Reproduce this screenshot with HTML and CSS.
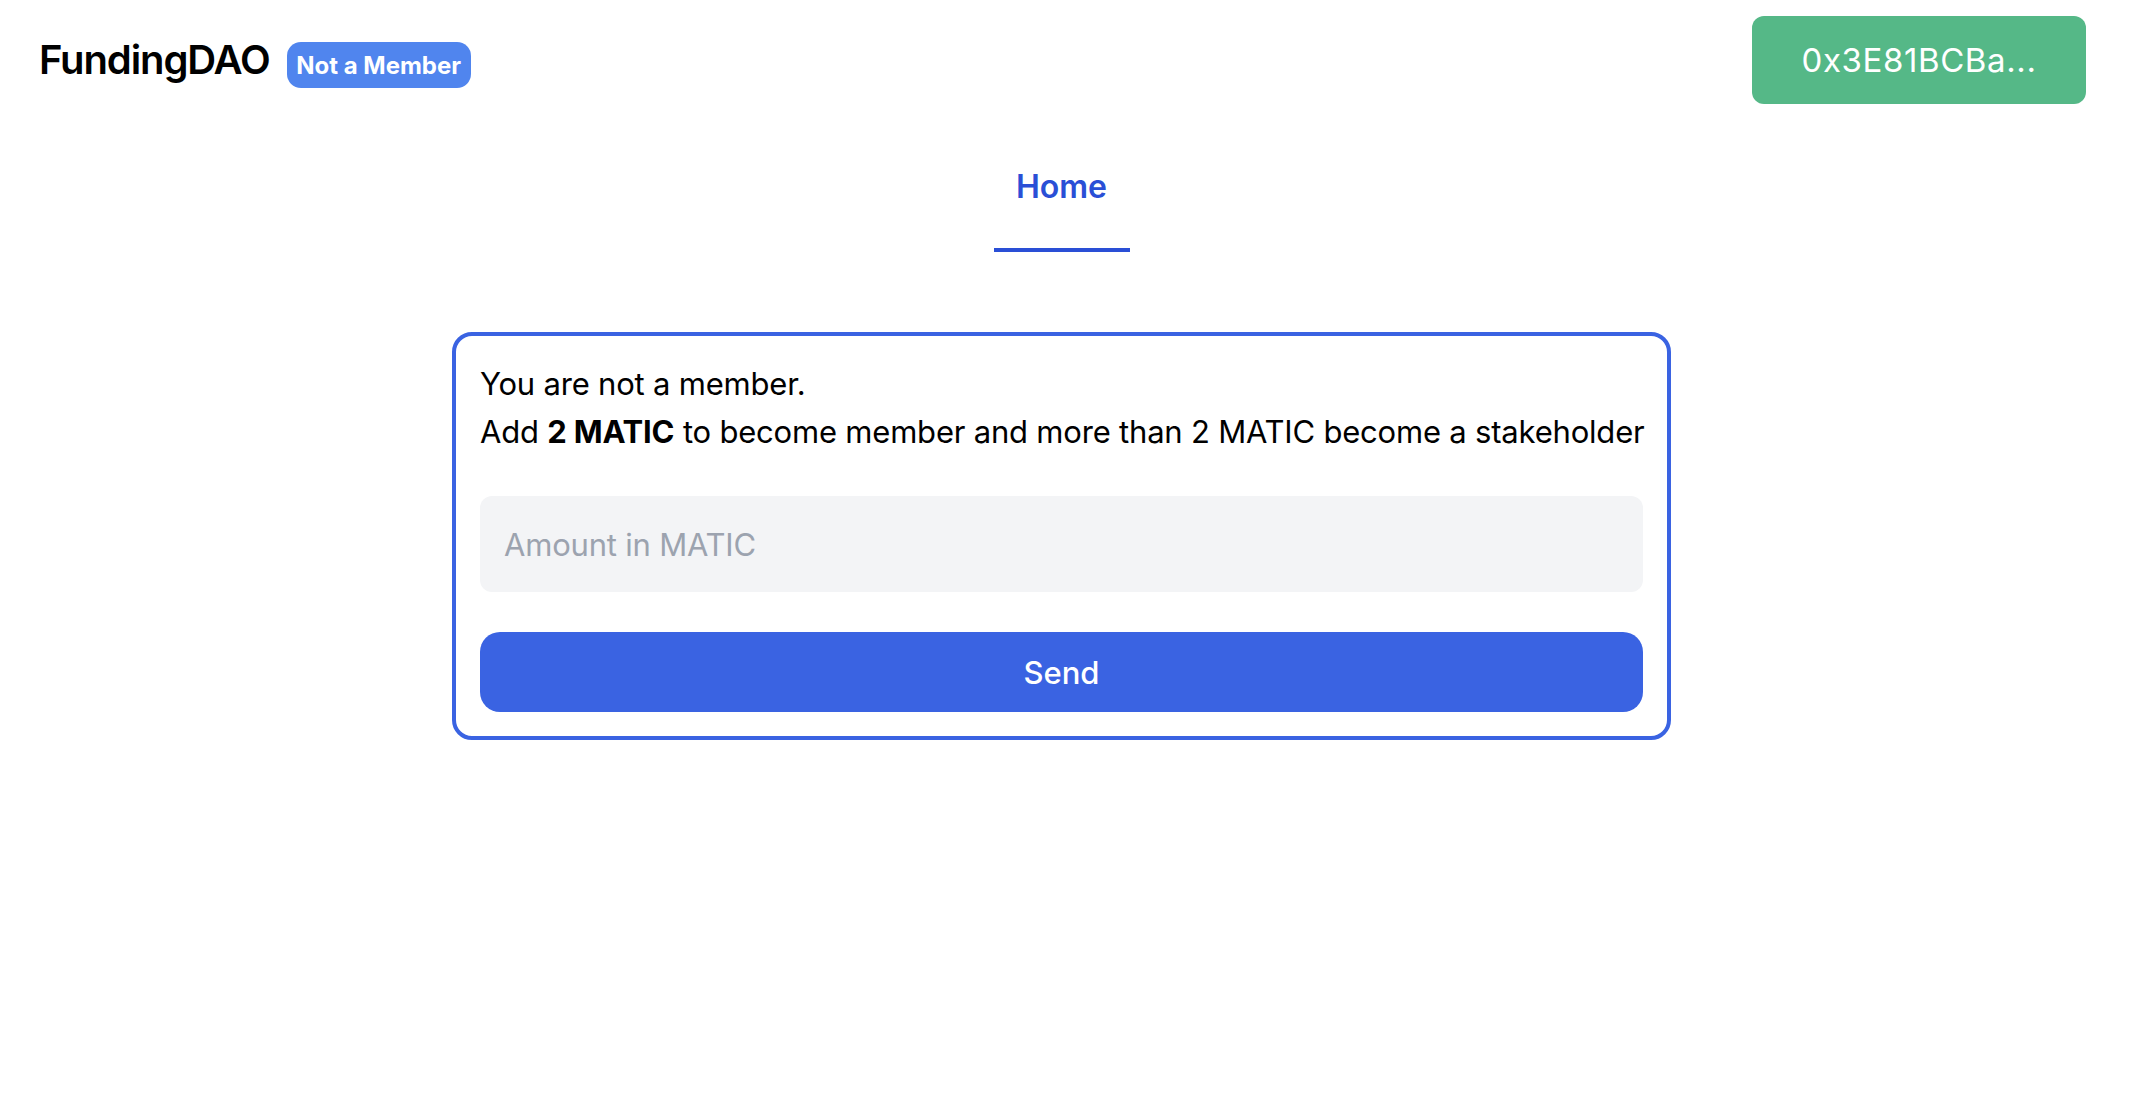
FILE: index.html
```html
<!DOCTYPE html>
<html lang="en">
<head>
<meta charset="utf-8">
<title>FundingDAO</title>
<link rel="stylesheet" href="styles.css">
</head>
<body>
<div class="page">
  <header class="topbar">
    <div class="brand">
      <span class="brand-name">FundingDAO</span>
      <span class="badge">Not a Member</span>
    </div>
    <button class="wallet">0x3E81BCBa...</button>
  </header>
  <nav class="tabs">
    <a class="tab active">Home</a>
  </nav>
  <main class="content">
    <section class="card">
      <p class="msg">You are not a member.</p>
      <p class="msg">Add <strong>2 MATIC</strong> to become member and more than 2 MATIC become a stakeholder</p>
      <input class="amount" type="text" placeholder="Amount in MATIC">
      <button class="send">Send</button>
    </section>
  </main>
</div>
</body>
</html>
```

FILE: styles.css
```css
* { box-sizing: border-box; }
html, body { margin: 0; padding: 0; background: #fff; }
body {
  font-family: Inter, "Noto Sans", sans-serif;
  color: #000;
}
.page {
  width: calc(100% - 15px);
}
.topbar {
  display: flex;
  align-items: center;
  justify-content: space-between;
  padding: 16px 37px 0 37px;
}
.brand {
  display: flex;
  align-items: center;
  gap: 17px;
}
.brand-name {
  font-size: 40px;
  font-weight: 600;
  letter-spacing: -1.1px;
  line-height: 48px;
  padding-left: 2px;
}
.badge {
  display: inline-flex;
  align-items: center;
  justify-content: center;
  width: 184px;
  height: 46px;
  border-radius: 14px;
  background: #5085ee;
  color: #fff;
  font-size: 24px;
  font-weight: 700;
  margin-top: 10px;
}
.wallet {
  width: 334px;
  height: 88px;
  border: none;
  border-radius: 12px;
  background: #55b887;
  color: #fff;
  font-family: inherit;
  font-size: 33px;
  font-weight: 400;
  letter-spacing: 0.6px;
  padding: 0;
}
.tabs {
  display: flex;
  justify-content: center;
  margin-top: 62px;
}
.tab {
  width: 136px;
  text-align: center;
  font-size: 32px;
  font-weight: 600;
  line-height: 40px;
  color: #2a4fd6;
  padding-top: 1px;
  padding-bottom: 41px;
  border-bottom: 4px solid #2a4fd6;
}
.content {
  display: flex;
  justify-content: center;
  margin-top: 80px;
}
.card {
  width: 1219px;
  border: 4px solid #3a63e2;
  border-radius: 20px;
  padding: 24px;
  display: flex;
  flex-direction: column;
}
.msg {
  margin: 0;
  font-size: 31px;
  line-height: 48px;
  letter-spacing: -0.2px;
  white-space: nowrap;
}
.msg strong { font-weight: 700; }
.amount {
  margin-top: 40px;
  height: 96px;
  border: none;
  border-radius: 12px;
  background: #f3f4f6;
  padding: 0 24px;
  font-family: inherit;
  font-size: 31px;
  letter-spacing: -0.2px;
  color: #000;
  outline: none;
}
.amount::placeholder { color: #9ca3af; }
.send {
  margin-top: 40px;
  height: 80px;
  border: none;
  border-radius: 20px;
  background: #3a63e2;
  color: #fff;
  font-family: inherit;
  font-size: 31px;
  font-weight: 500;
}
```
